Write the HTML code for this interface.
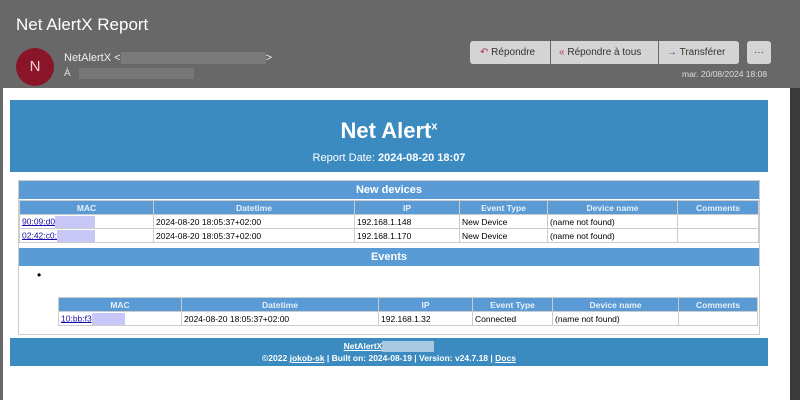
<html><head><style>
body{margin:0;width:800px;height:400px;background:#686868;font-family:"Liberation Sans",sans-serif;position:relative;overflow:hidden}
.a{position:absolute}
.btn{position:absolute;top:41px;height:23px;background:#d4d4d4;color:#333;font-size:10px;line-height:23px;box-sizing:border-box}
table{border-collapse:collapse;position:absolute;font-size:8.5px;table-layout:fixed}
td,th{border:1px solid #ccc;padding:0 2px;height:14px;white-space:nowrap;overflow:hidden}
th{background:#5b9bd5;color:#e8f0f8;font-weight:bold;text-align:center}
a{color:#1a0dab}
.blur{display:inline-block;background:#c8c8f8;height:12px;vertical-align:middle}
</style></head><body>
<div class="a" style="left:16px;top:15px;color:#fff;font-size:17px">Net AlertX Report</div>
<div class="a" style="left:16px;top:48px;width:38px;height:38px;border-radius:50%;background:#8a1528;color:#f0d0d8;font-size:15px;text-align:center;line-height:38px">N</div>
<div class="a" style="left:64px;top:52px;color:#eee;font-size:11px">NetAlertX &lt;<span style="display:inline-block;width:145px;height:12px;background:#7a7a7a;vertical-align:middle"></span>&gt;</div>
<div class="a" style="left:64px;top:68px;color:#ddd;font-size:10px">À <span style="display:inline-block;width:115px;height:11px;background:#777;vertical-align:middle;margin-left:6px"></span></div>
<div class="btn" style="left:470px;width:80px;padding-left:10px;border-radius:3px 0 0 3px"><span style="color:#b03070">↶</span> Répondre</div>
<div class="btn" style="left:551px;width:107px;padding-left:8px"><span style="color:#b03070">«</span> Répondre à tous</div>
<div class="btn" style="left:659px;width:80px;padding-left:8px;border-radius:0 3px 3px 0"><span style="color:#2060b0">→</span> Transférer</div>
<div class="btn" style="left:747px;width:24px;text-align:center;border-radius:3px">···</div>
<div class="a" style="left:682px;top:69px;color:#ddd;font-size:8.5px">mar. 20/08/2024 18:08</div>
<div class="a" style="left:3px;top:88px;width:787px;height:312px;background:#fff"></div>
<div class="a" style="left:790px;top:88px;width:10px;height:312px;background:#3a3a3a"></div>
<div class="a" style="left:10px;top:100px;width:758px;height:72px;background:#3b8bc0;color:#fff;text-align:center">
<div style="font-size:22px;font-weight:bold;margin-top:18px">Net Alert<sup style="font-size:11px">x</sup></div>
<div style="font-size:11px;margin-top:8px">Report Date: <b>2024-08-20 18:07</b></div></div>
<div class="a" style="left:18px;top:180px;width:742px;height:155px;border:1px solid #ccc;box-sizing:border-box"></div>
<div class="a" style="left:19px;top:181px;width:740px;height:18px;background:#5b9bd5;color:#fff;font-weight:bold;font-size:11px;text-align:center;line-height:18px">New devices</div>
<table style="left:19px;top:200px;width:740px">
<colgroup><col style="width:134px"><col style="width:201px"><col style="width:105px"><col style="width:88px"><col style="width:130px"><col></colgroup>
<tr><th>MAC</th><th>Datetime</th><th>IP</th><th>Event Type</th><th>Device name</th><th>Comments</th></tr>
<tr><td><a href="#">90:09:d0</a><span class="blur" style="width:40px"></span></td><td>2024-08-20 18:05:37+02:00</td><td>192.168.1.148</td><td>New Device</td><td>(name not found)</td><td></td></tr>
<tr><td><a href="#">02:42:c0:</a><span class="blur" style="width:38px"></span></td><td>2024-08-20 18:05:37+02:00</td><td>192.168.1.170</td><td>New Device</td><td>(name not found)</td><td></td></tr>
</table>
<div class="a" style="left:19px;top:248px;width:740px;height:18px;background:#5b9bd5;color:#fff;font-weight:bold;font-size:11px;text-align:center;line-height:18px">Events</div>
<div class="a" style="left:37px;top:268px;font-size:12px">•</div>
<table style="left:58px;top:297px;width:700px">
<colgroup><col style="width:123px"><col style="width:197px"><col style="width:94px"><col style="width:80px"><col style="width:126px"><col></colgroup>
<tr><th>MAC</th><th>Datetime</th><th>IP</th><th>Event Type</th><th>Device name</th><th>Comments</th></tr>
<tr><td><a href="#">10:bb:f3</a><span class="blur" style="width:33px"></span></td><td>2024-08-20 18:05:37+02:00</td><td>192.168.1.32</td><td>Connected</td><td>(name not found)</td><td></td></tr>
</table>
<div class="a" style="left:10px;top:338px;width:758px;height:28px;background:#3b8bc0;color:#fff;text-align:center;font-size:8.5px;font-weight:bold;line-height:12px;padding-top:2px;box-sizing:border-box">
<div><u>NetAlertX</u><span style="display:inline-block;width:52px;height:11px;background:#a8c8e0;vertical-align:middle"></span></div>
<div>©2022 <u>jokob-sk</u> | Built on: 2024-08-19 | Version: v24.7.18 | <u>Docs</u></div></div>
</body></html>
